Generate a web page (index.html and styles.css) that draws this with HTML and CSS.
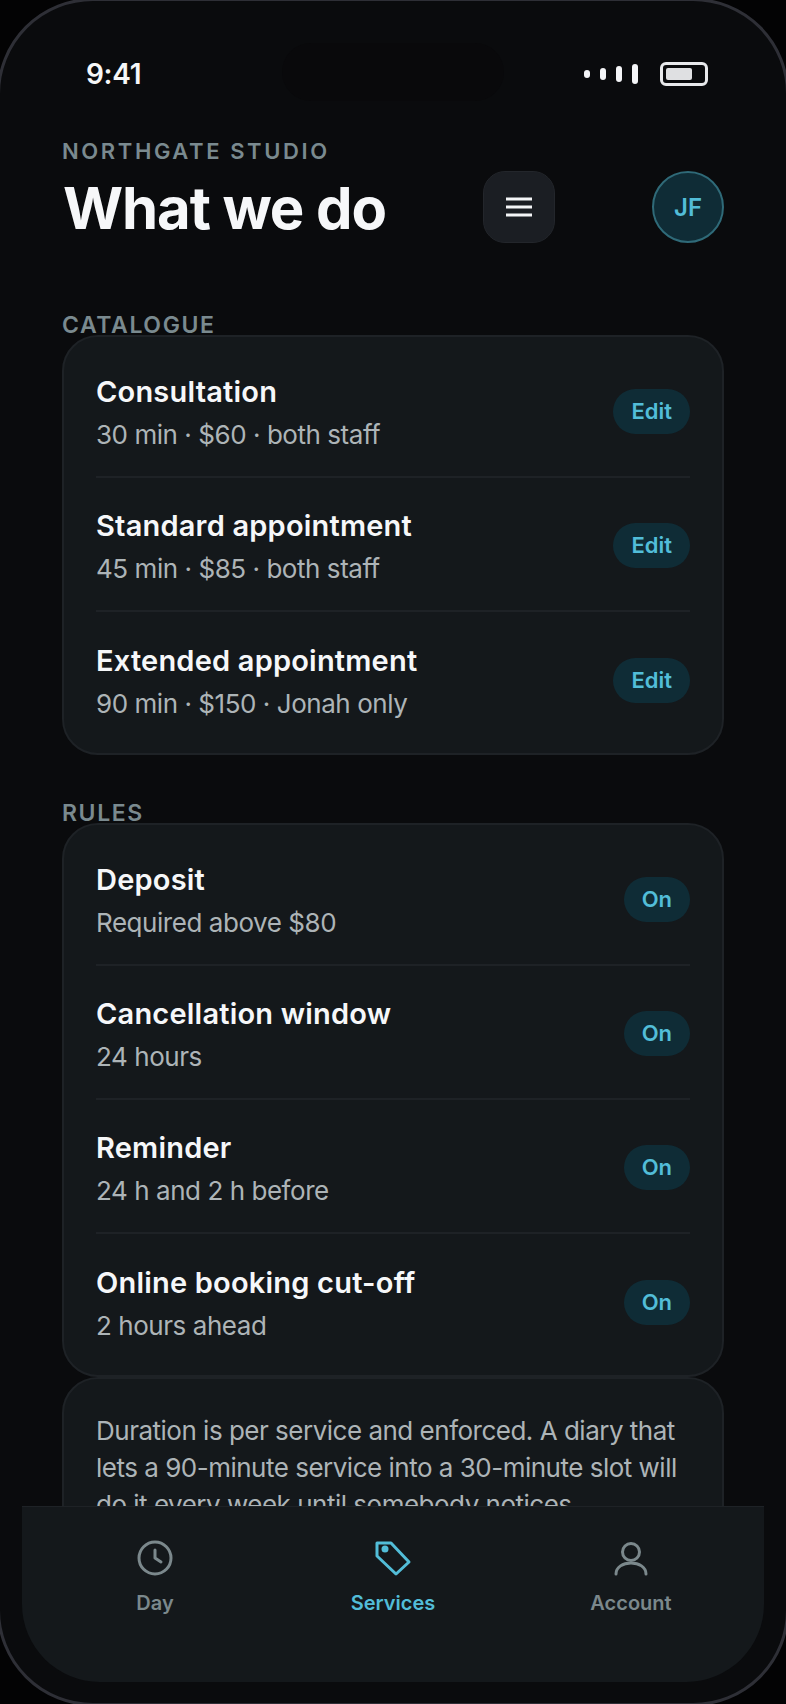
FILE: index.html
```html
<!DOCTYPE html>
<html lang="en">
<head>
  <meta charset="UTF-8" />
  <title>What we do</title>
  <link rel="stylesheet" href="styles.css">
</head>
<body>
  <div class="phone">
    <div class="island"></div>

    <div class="status">
      <span class="time">9:41</span>
      <div class="status-icons">
        <div class="signal">
          <i class="bar1"></i><i class="bar2"></i><i class="bar3"></i><i class="bar4"></i>
        </div>
        <div class="battery"><i></i></div>
      </div>
    </div>

    <div class="scroll">
      <div class="header">
        <div>
          <div class="eyebrow">NORTHGATE STUDIO</div>
          <h1>What we do</h1>
        </div>
        <div class="menu-btn">
          <svg width="26" height="20" viewBox="0 0 26 20"><path d="M0 2h26M0 10h26M0 18h26" stroke="#f4f5f7" stroke-width="3"/></svg>
        </div>
        <div class="avatar">JF</div>
      </div>

      <div class="section-label first">CATALOGUE</div>
      <div class="card">
        <div class="row">
          <div class="info"><div class="name">Consultation</div><div class="sub">30 min · $60 · both staff</div></div>
          <span class="pill">Edit</span>
        </div>
        <div class="row">
          <div class="info"><div class="name">Standard appointment</div><div class="sub">45 min · $85 · both staff</div></div>
          <span class="pill">Edit</span>
        </div>
        <div class="row">
          <div class="info"><div class="name">Extended appointment</div><div class="sub">90 min · $150 · Jonah only</div></div>
          <span class="pill">Edit</span>
        </div>
      </div>

      <div class="section-label">RULES</div>
      <div class="card">
        <div class="row">
          <div class="info"><div class="name">Deposit</div><div class="sub">Required above $80</div></div>
          <span class="pill">On</span>
        </div>
        <div class="row">
          <div class="info"><div class="name">Cancellation window</div><div class="sub">24 hours</div></div>
          <span class="pill">On</span>
        </div>
        <div class="row">
          <div class="info"><div class="name">Reminder</div><div class="sub">24 h and 2 h before</div></div>
          <span class="pill">On</span>
        </div>
        <div class="row">
          <div class="info"><div class="name">Online booking cut-off</div><div class="sub">2 hours ahead</div></div>
          <span class="pill">On</span>
        </div>
      </div>

      <div class="card note">Duration is per service and enforced. A diary that lets a 90-minute service into a 30-minute slot will do it every week until somebody notices.</div>
    </div>

    <div class="tabs">
      <div class="tab">
        <svg width="40" height="40" viewBox="0 0 40 40" fill="none" stroke="currentColor" stroke-width="3" stroke-linecap="round" stroke-linejoin="round"><circle cx="20" cy="20" r="16"/><path d="M20 12v8l6 4"/></svg>
        <span>Day</span>
      </div>
      <div class="tab active">
        <svg width="40" height="40" viewBox="0 0 40 40" fill="none" stroke="currentColor" stroke-width="3" stroke-linejoin="round"><path d="M4 5h14l18 19-13 12L4 18z"/><circle cx="12" cy="11" r="3.5" fill="currentColor" stroke="none"/></svg>
        <span>Services</span>
      </div>
      <div class="tab">
        <svg width="40" height="40" viewBox="0 0 40 40" fill="none" stroke="currentColor" stroke-width="3" stroke-linecap="round"><circle cx="20" cy="14" r="8.5"/><path d="M5 36c0-7 7-11 15-11s15 4 15 11"/></svg>
        <span>Account</span>
      </div>
    </div>
  </div>
</body>
</html>
```

FILE: styles.css
```css
* {
  box-sizing: border-box;
}
html, body {
  height: 1704px;
  overflow: hidden;
}
body {
  margin: 0;
  background-color: #030304;
  font-family: Inter, "Liberation Sans", sans-serif;
}
/* the frame runs a little past the window, only the corners show */
.phone {
  position: relative;
  width: 792px;
  height: 1708px;
  margin: -2px -3px;
  border: 3px solid #2e2f36;
  border-radius: 96px;
  background-color: #0a0b0d;
  display: flex;
  flex-direction: column;
  overflow: hidden;
}
.island {
  position: absolute;
  top: 42px;
  left: 282px;
  width: 222px;
  height: 58px;
  border-radius: 29px;
  background-color: #09090b;
}
.status {
  position: relative;
  height: 133px;
  padding: 53px 78px 0 86px;
  display: flex;
  justify-content: space-between;
  flex-shrink: 0;
}
.time {
  color: #f6f7f8;
  font-size: 28px;
  font-weight: 600;
  letter-spacing: -0.3px;
  line-height: 40px;
}
.status-icons {
  display: flex;
  align-items: center;
  height: 40px;
  gap: 22px;
}
.signal {
  display: flex;
  align-items: center;
  gap: 10px;
}
.signal i {
  display: block;
  width: 6px;
  background-color: #f4f5f7;
  border-radius: 3px;
}
.bar1 { height: 8px; }
.bar2 { height: 12px; }
.bar3 { height: 16px; }
.bar4 { height: 20px; }
.battery {
  width: 48px;
  height: 24px;
  border: 3px solid #e8e9eb;
  border-radius: 6px;
  padding: 3px;
}
.battery i {
  display: block;
  width: 26px;
  height: 12px;
  background-color: #dfe0e2;
  border-radius: 2px;
}
.scroll {
  flex: 1;
  min-height: 0;
  margin: 0 22px;
  padding: 3px 40px 0;
  overflow: hidden;
}
.header {
  display: flex;
  justify-content: space-between;
  align-items: flex-end;
}
.eyebrow {
  color: #7a8a8f;
  font-size: 22px;
  font-weight: 600;
  letter-spacing: 2.6px;
  line-height: 28px;
  margin-bottom: 7px;
}
h1 {
  margin: 0 0 -1px 1px;
  color: #f6f7f9;
  font-size: 58px;
  font-weight: 700;
  letter-spacing: -1.1px;
  line-height: 72px;
}
.menu-btn {
  width: 72px;
  height: 72px;
  border: 1px solid #23262b;
  border-radius: 22px;
  background-color: #1b1e23;
  display: flex;
  align-items: center;
  justify-content: center;
}
.avatar {
  width: 72px;
  height: 72px;
  border: 2px solid #2f6a78;
  border-radius: 50%;
  background-color: #0f2c36;
  color: #52bdd8;
  font-size: 24px;
  font-weight: 600;
  display: flex;
  align-items: center;
  justify-content: center;
}
.section-label {
  color: #7a8a8f;
  font-size: 23px;
  font-weight: 600;
  letter-spacing: 1.6px;
  line-height: 22px;
  margin-top: 47px;
  margin-bottom: -1px;
}
.section-label.first {
  margin-top: 71px;
}
.card {
  background-color: #14181b;
  border: 2px solid #1e2226;
  border-radius: 36px;
  padding: 7px 32px;
}
.row {
  height: 134px;
  display: flex;
  align-items: center;
  justify-content: space-between;
  border-bottom: 2px solid #1e2226;
}
.row:last-child {
  border-bottom: none;
}
.info {
  padding-top: 6px;
}
.name {
  color: #f6f7f9;
  font-size: 29px;
  font-weight: 600;
  letter-spacing: 0.2px;
  line-height: 36px;
  margin-bottom: 7px;
}
.sub {
  color: #adb4b7;
  font-size: 26px;
  letter-spacing: -0.45px;
  line-height: 36px;
}
.pill {
  height: 45px;
  margin-top: 2px;
  padding: 0 18px;
  border-radius: 23px;
  background-color: #0f2c36;
  color: #52bdd8;
  font-size: 22px;
  font-weight: 600;
  line-height: 45px;
}
.note {
  padding: 33px 32px;
  color: #adb4b7;
  font-size: 26px;
  letter-spacing: -0.5px;
  line-height: 37px;
}
.tabs {
  height: 176px;
  margin: 0 22px 21px;
  padding: 31px 14px 0;
  flex-shrink: 0;
  background-color: #14181b;
  border-top: 1px solid #1e2226;
  border-radius: 0 0 78px 78px;
  display: grid;
  grid-template-columns: 1fr 1fr 1fr;
}
.tab {
  color: #7b888c;
  display: flex;
  flex-direction: column;
  align-items: center;
  gap: 13px;
  font-size: 20px;
  font-weight: 600;
  line-height: 24px;
}
.tab.active {
  color: #52bdd8;
}
```
